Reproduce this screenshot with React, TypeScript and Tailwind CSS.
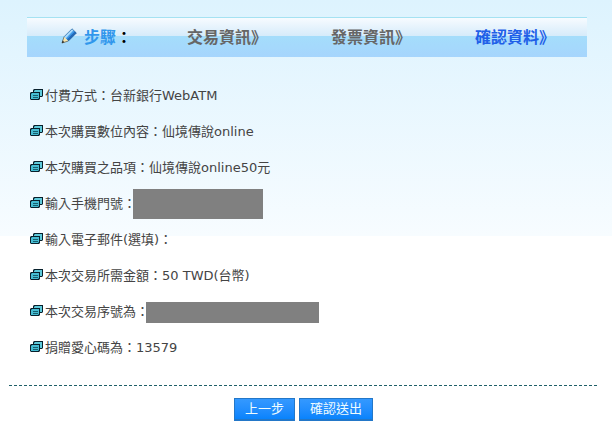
const steps = [
  { label: '交易資訊》', active: false },
  { label: '發票資訊》', active: false },
  { label: '確認資料》', active: true },
]

const details = [
  { label: '付費方式：', value: '台新銀行WebATM' },
  { label: '本次購買數位內容：', value: '仙境傳說online' },
  { label: '本次購買之品項：', value: '仙境傳說online50元' },
  { label: '輸入手機門號：', mask: 'w-[130px] h-[30px]' },
  { label: '輸入電子郵件(選填)：', value: '' },
  { label: '本次交易所需金額：', value: '50 TWD(台幣)' },
  { label: '本次交易序號為：', mask: 'w-[173px] h-[21px]' },
  { label: '捐贈愛心碼為：', value: '13579' },
]

export default function App() {
  return (
    <main className="min-h-screen bg-white bg-[linear-gradient(#ddf3fe,#f7fcff)] bg-[length:100%_236px] bg-no-repeat pt-[17px] pb-4 font-['DejaVu_Sans','Noto_Sans_CJK_TC',sans-serif] text-[13px] leading-5 text-[#444]">
      <StepBar />

      <dl className="mt-[21px] pl-[30px]">
        {details.map((item) => (
          <div key={item.label} className="flex h-9 items-center whitespace-nowrap">
            <CardsIcon />
            <dt className="ml-0.5">{item.label}</dt>
            <dd>{item.mask ? <span className={`-ml-[3px] block bg-[#808080] ${item.mask}`} /> : item.value}</dd>
          </div>
        ))}
      </dl>

      <hr className="mt-[19px] mr-[15px] ml-[9px] border-t border-dashed border-t-[#1f6068]" />

      <div className="mt-3 flex justify-center gap-1 pr-[5px]">
        <ActionButton>上一步</ActionButton>
        <ActionButton>確認送出</ActionButton>
      </div>
    </main>
  )
}

function StepBar() {
  return (
    <header className="mr-[25px] ml-[27px] grid h-10 grid-cols-[160fr_144fr_144fr_112fr] items-center border-t border-t-[#a5e2f2] bg-[linear-gradient(#f7fbff,#d5ebfa_47%,#a4ddfb_47%,#a6d5fd)] text-[16px] font-bold whitespace-nowrap">
      <div className="flex items-center pl-[34px]">
        <PencilIcon />
        <span className="ml-[7px] text-[#3097ec]">步驟</span>
        <span className="text-black">：</span>
      </div>
      {steps.map((step) => (
        <span key={step.label} className={step.active ? 'text-[#1f60e8]' : 'text-[#666]'}>
          {step.label}
        </span>
      ))}
    </header>
  )
}

function ActionButton({ children }: { children: string }) {
  return (
    <button
      type="button"
      className="h-[23px] border border-b-2 border-[#2377c8] bg-linear-to-b from-[#3499ff] to-[#0783fc] px-[10px] text-[13px] leading-5 text-[#effcff]"
    >
      {children}
    </button>
  )
}

function PencilIcon() {
  return (
    <svg className="mb-1" width="16" height="16" viewBox="0 0 16 16" fill="none" aria-hidden="true">
      <path d="M11 .8 15.4 5 7.4 13 3 8.8Z" fill="#3e9bea" />
      <path d="M11 .8 12.6 2.3 4.7 10.4 3 8.8Z" fill="#a8dafc" />
      <path d="M13.8 3.5 15.4 5 7.4 13 5.8 11.5Z" fill="#2369b8" />
      <path d="M3 8.8 7.4 13 1.2 14.9Z" fill="#f8e6ae" />
      <path d="m1.6 12.6 1.8 1.6-2.6 1Z" fill="#222" />
      <path d="M3 8.8 11 .8 15.4 5l-8 8" stroke="#255a91" strokeWidth=".6" />
      <path d="M3 8.8 1 15l6.4-2" stroke="#3a3a32" strokeWidth=".6" />
    </svg>
  )
}

function CardsIcon() {
  return (
    <svg className="mb-0.5" width="13" height="12" viewBox="0 0 13 12" aria-hidden="true">
      <path d="M4 0h9v7l-1 1H3V1Z" fill="#08202c" />
      <path d="M5 1h7v6H4V2Z" fill="#5ecadb" />
      <path d="M1 3h9v7l-1 1H1l-1-1V4Z" fill="#08202c" />
      <path d="M2 4h7v5l-1 1H1V5Z" fill="#46bdd3" />
      <path d="M3 6h5v1H3ZM3 8h5v1H3Z" fill="#17606f" />
    </svg>
  )
}
